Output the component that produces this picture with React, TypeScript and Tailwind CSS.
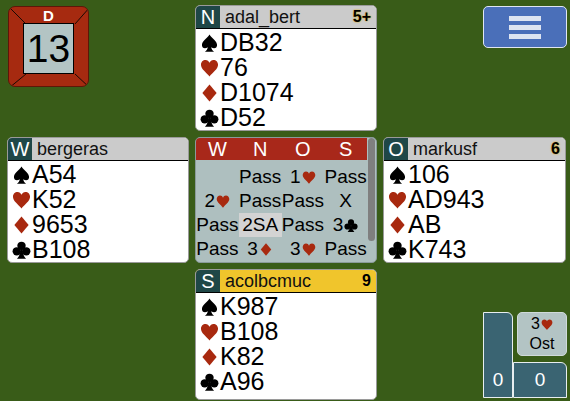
import React from "react";

const RED = "#a8290f";

// suit glyphs drawn as small icons
function Suit({ s, size = 20 }: { s: string; size?: number }) {
  const red = s === "♥" || s === "♦";
  const fill = red ? RED : "#000";
  return (
    <svg
      width={Math.round(size * 0.95)}
      height={size}
      viewBox="0 0 20 20"
      className="inline-block shrink-0"
      aria-label={s}
    >
      {s === "♠" && (
        <path
          fill={fill}
          d="M10 1C7.5 5 2 8 2 12.2C2 15.3 5 16.8 8.2 14.6C7.9 16.6 7 18 5.2 19.2L14.8 19.2C13 18 12.1 16.6 11.8 14.6C15 16.8 18 15.3 18 12.2C18 8 12.5 5 10 1Z"
        />
      )}
      {s === "♥" && (
        <path
          fill={fill}
          d="M10 19C7 15 1 11.2 1 6.6C1 3.6 3.2 1.5 5.8 1.5C7.8 1.5 9.2 2.8 10 4.6C10.8 2.8 12.2 1.5 14.2 1.5C16.8 1.5 19 3.6 19 6.6C19 11.2 13 15 10 19Z"
        />
      )}
      {s === "♦" && <path fill={fill} d="M10 1L17.5 10L10 19L2.5 10Z" />}
      {s === "♣" && (
        <g fill={fill}>
          <circle cx="10" cy="5.6" r="4.4" />
          <circle cx="5" cy="11.4" r="4.4" />
          <circle cx="15" cy="11.4" r="4.4" />
          <path d="M9 9L11 9C11.3 13.5 12.5 17 14.8 19.2L5.2 19.2C7.5 17 8.7 13.5 9 9Z" />
        </g>
      )}
    </svg>
  );
}

function Bid({ text, size = 15 }: { text: string; size?: number }) {
  const m = text.match(/^(\d)([♠♥♦♣])$/);
  if (!m) return <>{text}</>;
  return (
    <span className="inline-flex items-center gap-[1px]">
      {m[1]}
      <Suit s={m[2]} size={size} />
    </span>
  );
}

type Hand = {
  seat: string;
  name: string;
  score: string;
  cards: string[];
  active?: boolean;
};

function HandBox({ hand }: { hand: Hand }) {
  const suits = ["♠", "♥", "♦", "♣"];
  return (
    <div className="bg-white rounded-[5px] border border-[#9a9a9a] overflow-hidden flex flex-col">
      <div
        className={`h-[23px] flex items-center border-b border-black ${
          hand.active ? "bg-[#f0c52c]" : "bg-[#cbcbcb]"
        }`}
      >
        <div className="w-[24px] h-full bg-[#1f4747] text-white text-[20px] leading-[23px] text-center">
          {hand.seat}
        </div>
        <div className="ml-[5px] text-[18px] leading-[23px] text-[#111]">{hand.name}</div>
        <div
          className={`ml-auto mr-[5px] text-[16px] font-bold text-black ${
            hand.active ? "" : "[text-shadow:0_0_2px_#d9b02a,0_0_1px_#d9b02a]"
          }`}
        >
          {hand.score}
        </div>
      </div>
      <div className="pl-[4px] pt-[1px]">
        {hand.cards.map((c, i) => (
          <div key={i} className="h-[25px] text-[25px] leading-[25px] text-black flex items-center gap-[1px]">
            <Suit s={suits[i]} size={20} />
            <span>{c}</span>
          </div>
        ))}
      </div>
    </div>
  );
}

function BoardTile() {
  return (
    <div className="relative w-[81px] h-[81px] ml-[1px] mt-[1px] rounded-[7px] bg-[#a62a10] border border-[#5e1608] overflow-hidden">
      <svg className="absolute inset-0" width="81" height="81" viewBox="0 0 81 81">
        <line x1="0" y1="0" x2="17" y2="17" stroke="#1a0a05" strokeWidth="1" />
        <line x1="81" y1="0" x2="66" y2="17" stroke="#1a0a05" strokeWidth="1" />
        <line x1="0" y1="81" x2="17" y2="67" stroke="#1a0a05" strokeWidth="1" />
        <line x1="81" y1="81" x2="66" y2="67" stroke="#1a0a05" strokeWidth="1" />
      </svg>
      <div className="relative flex flex-col items-center">
        <div className="h-[16px] text-white font-bold text-[15px] leading-[18px]">D</div>
        <div className="w-[51px] h-[51px] bg-[#b3c4c4] border border-black flex items-center justify-center text-[39px] leading-none text-black">
          13
        </div>
      </div>
    </div>
  );
}

export default function App() {
  const north: Hand = { seat: "N", name: "adal_bert", score: "5+", cards: ["DB32", "76", "D1074", "D52"] };
  const west: Hand = { seat: "W", name: "bergeras", score: "", cards: ["A54", "K52", "9653", "B108"] };
  const east: Hand = { seat: "O", name: "markusf", score: "6", cards: ["106", "AD943", "AB", "K743"] };
  const south: Hand = { seat: "S", name: "acolbcmuc", score: "9", cards: ["K987", "B108", "K82", "A96"], active: true };

  const bids = [
    ["", "Pass", "1♥", "Pass"],
    ["2♥", "Pass", "Pass", "X"],
    ["Pass", "2SA", "Pass", "3♣"],
    ["Pass", "3♦", "3♥", "Pass"],
  ];

  return (
    <div className="w-[570px] h-[401px] overflow-hidden bg-[#395c18] font-['Liberation_Sans',Arial,sans-serif] grid grid-cols-[182px_182px_183px] grid-rows-[126px_126px_131px] gap-x-[6px] gap-y-[6px] pl-[7px] pt-[5px]">
      <div>
        <BoardTile />
      </div>

      <HandBox hand={north} />

      <div className="flex justify-end items-start">
        <button className="w-[84px] h-[42px] mt-[1px] -mr-[1px] rounded-[5px] bg-[#4a6fb9] border border-[#dfe6f2] flex flex-col items-center justify-center gap-[4px]">
          <span className="block w-[32px] h-[5px] bg-[#dde4f1]" />
          <span className="block w-[32px] h-[5px] bg-[#dde4f1]" />
          <span className="block w-[32px] h-[5px] bg-[#dde4f1]" />
        </button>
      </div>

      <HandBox hand={west} />

      <div className="relative rounded-[5px] border border-[#8a9a9a] bg-[#aebfbf] overflow-hidden flex">
        <div className="flex-1">
          <div className="h-[22px] bg-[#a8281a] grid grid-cols-4 text-white text-[20px] leading-[22px] text-center">
            <span>W</span>
            <span>N</span>
            <span>O</span>
            <span>S</span>
          </div>
          <div className="pt-[5px]">
            {bids.map((row, i) => (
              <div key={i} className="grid grid-cols-4 h-[24px] text-[19px] leading-[24px] text-black text-center">
                {row.map((b, j) => (
                  <span
                    key={j}
                    className={`whitespace-nowrap flex items-center justify-center ${b === "2SA" ? "bg-[#d3d3d3]" : ""}`}
                  >
                    <Bid text={b} />
                  </span>
                ))}
              </div>
            ))}
          </div>
        </div>
        <div className="w-[9px] shrink-0 relative">
          <div className="absolute top-0 left-[1px] w-[7px] h-[103px] rounded-full bg-[#7f7f7f]" />
        </div>
      </div>

      <HandBox hand={east} />

      <div />

      <HandBox hand={south} />

      <div className="flex justify-end items-end pb-[2px]">
        <div className="flex w-[84px] h-[86px] -mr-[1px]">
          <div className="w-[30px] h-full bg-[#3a6472] border border-[#e8eef0] rounded-tr-[6px] flex items-end justify-center pb-[3px] text-white text-[19px]">
            0
          </div>
          <div className="flex-1 flex flex-col justify-between">
            <div className="ml-[4px] h-[44px] rounded-[5px] bg-[#b3c4c4] border border-[#d0dada] flex flex-col items-center justify-center text-[16px] leading-[20px] text-black">
              <Bid text="3♥" size={13} />
              <span>Ost</span>
            </div>
            <div className="h-[36px] bg-[#3a6472] border border-[#e8eef0] rounded-tr-[6px] flex items-end justify-center pb-[3px] text-white text-[19px]">
              0
            </div>
          </div>
        </div>
      </div>
    </div>
  );
}
